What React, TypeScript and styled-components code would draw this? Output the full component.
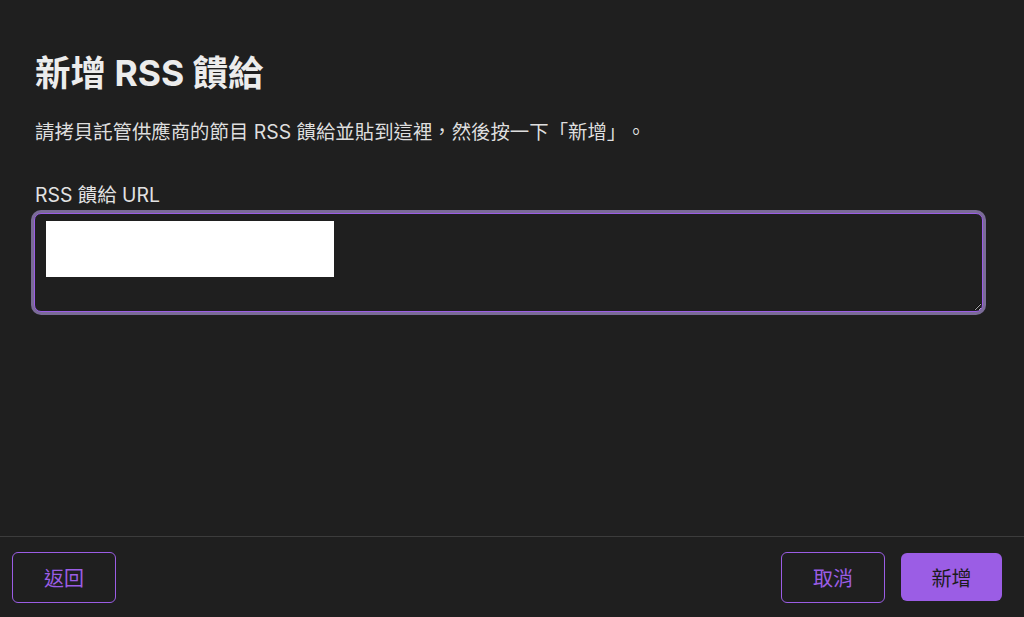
import React from "react";
import styled, { createGlobalStyle } from "styled-components";

const Global = createGlobalStyle`
  html, body { margin: 0; padding: 0; background: #1f1f1f; }
  body {
    font-family: "Inter", "Noto Sans CJK TC", sans-serif;
    color: #e6e6e6;
    text-spacing-trim: space-all;
  }
  * { box-sizing: border-box; }
`;

const Page = styled.div`
  width: 1024px;
  height: 617px;
  display: flex;
  flex-direction: column;
  background: #1f1f1f;
`;

const Main = styled.main`
  flex: 1;
  padding: 50px 0 0 34px;
  display: flex;
  flex-direction: column;
`;

const Title = styled.h1`
  margin: 0 0 0 1px;
  font-size: 35.5px;
  font-weight: 700;
  line-height: 48px;
  color: #ececec;
  font-family: "Inter", "Noto Sans CJK TC", sans-serif;
`;

const Desc = styled.p`
  margin: 20px 0 0 1px;
  font-size: 19.4px;
  line-height: 28px;
  color: #dedede;
`;

const Label = styled.label`
  margin: 36px 0 0 1px;
  font-size: 19.4px;
  line-height: 26px;
  color: #e2e2e2;
`;

const FieldWrap = styled.div`
  position: relative;
  margin-top: 5px;
  width: 949px;
  height: 99px;
`;

const Area = styled.textarea`
  width: 100%;
  height: 100%;
  background: #1f1f1f;
  border: 1px solid #9b5de5;
  border-radius: 7px;
  box-shadow: 0 0 0 3px #7a6b97;
  outline: none;
  resize: vertical;
  color: #fff;
  font-size: 17px;
  padding: 8px 12px;
`;

const Redact = styled.div`
  position: absolute;
  left: 12px;
  top: 8px;
  width: 288px;
  height: 56px;
  background: #ffffff;
  pointer-events: none;
`;

const Footer = styled.footer`
  height: 81px;
  border-top: 1px solid #3c3c3c;
  display: flex;
  align-items: center;
  padding: 0 22px 0 12px;
  gap: 16px;
`;

const Spacer = styled.div`
  flex: 1;
`;

const Btn = styled.button<{ $primary?: boolean }>`
  font-family: "Noto Sans CJK TC", sans-serif;
  font-size: 20px;
  font-weight: 400;
  border-radius: 6px;
  cursor: pointer;
  display: flex;
  align-items: center;
  justify-content: center;
  ${(p) =>
    p.$primary
      ? `
    width: 101px; height: 48px;
    background: #9b5de5; color: #1c1c1c; border: none;
  `
      : `
    width: 104px; height: 51px;
    background: transparent; color: #9b5de5; border: 1.5px solid #9b5de5;
  `}
`;

export default function App() {
  return (
    <Page>
      <Global />
      <Main>
        <Title>新增 RSS 饋給</Title>
        <Desc>請拷貝託管供應商的節目 RSS 饋給並貼到這裡，然後按一下「新增」。</Desc>
        <Label>RSS 饋給 URL</Label>
        <FieldWrap>
          <Area />
          <Redact />
        </FieldWrap>
      </Main>
      <Footer>
        <Btn>返回</Btn>
        <Spacer />
        <Btn>取消</Btn>
        <Btn $primary>新增</Btn>
      </Footer>
    </Page>
  );
}
